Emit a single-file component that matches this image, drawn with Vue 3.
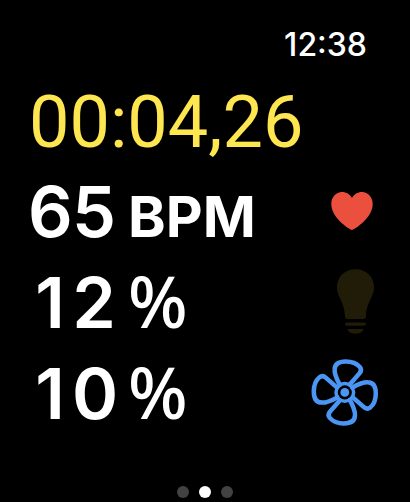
<script setup>
const metrics = [
  { id: 'heart', value: '65', unit: 'BPM' },
  { id: 'light', value: '12', unit: '%' },
  { id: 'fan', value: '10', unit: '%' },
]
const pages = [1, 2, 3]
const currentPage = 2
const blades = [0, 90, 180, 270]
</script>

<template>
  <main class="watch">
    <header class="status"><time>12:38</time></header>
    <div class="timer">00:04,26</div>
    <section v-for="m in metrics" :key="m.id" class="metric">
      <div class="reading">
        <span class="value"><span v-for="(digit, i) in m.value" :key="i" class="digit">{{ digit }}</span></span>
        <span class="unit" :class="{ percent: m.unit === '%' }">{{ m.unit }}</span>
      </div>
      <svg class="icon" :class="m.id" viewBox="0 0 72 91" aria-hidden="true">
        <path
          v-if="m.id === 'heart'"
          d="M44 62C42.500 62 23.300 50.500 23.300 36C23.300 29 28 24 34 24C38.500 24 42 26.300 44 30C46 26.300 49.500 24 54 24C60 24 64.700 29 64.700 36C64.700 50.500 45.500 62 44 62Z"
        />
        <template v-else-if="m.id === 'light'">
          <path d="M47.500 10.300C37 10.300 29 17.800 29 28C29 39 36.500 42 37 57.500Q37.200 60 39.500 60H55.500Q57.800 60 58 57.500C58.500 42 66 39 66 28C66 17.800 58 10.300 47.500 10.300Z" />
          <rect x="37" y="63.500" width="21" height="3.200" rx="1.600" />
          <path d="M39.500 70H55.500C55 73 52 74.500 47.500 74.500C43 74.500 40 73 39.500 70Z" />
        </template>
        <g v-else transform="translate(36.800 42.400)">
          <path
            v-for="angle in blades"
            :key="angle"
            class="blade"
            :transform="`rotate(${angle})`"
            d="M-5 -7.500C-8 -13 -10.500 -18 -10.200 -23C-10 -29 -6 -31 1 -31C7 -31 12 -29 15 -25.500C17 -23 16.500 -21 14.500 -18.800L5 -8"
          />
          <circle class="ring" r="8.800" />
          <circle r="4.400" />
        </g>
      </svg>
    </section>
    <nav class="pager" aria-label="Pages">
      <span v-for="p in pages" :key="p" class="dot" :class="{ current: p === currentPage }"></span>
    </nav>
  </main>
</template>

<style>
body {
  margin: 0;
  background: #000;
}
</style>

<style scoped>
.watch {
  display: flex;
  flex-direction: column;
  box-sizing: border-box;
  min-height: 100vh;
  padding-bottom: 4px;
  background: #000;
  color: #fff;
  font-family: Inter, sans-serif;
}
.status {
  padding: 25px 43px 12px;
  text-align: right;
  font-size: 32px;
  font-weight: 500;
  line-height: 40px;
}
.timer {
  padding-left: 29px;
  color: #fde650;
  font-family: Roboto, sans-serif;
  font-size: 72px;
  line-height: 91px;
  white-space: nowrap;
}
.metric {
  display: flex;
  justify-content: space-between;
  height: 91px;
  padding: 0 30px 0 28px;
}
.reading {
  display: flex;
  align-items: baseline;
  gap: 12px;
  font-size: 70px;
  line-height: 88px;
  font-weight: 600;
}
.digit {
  display: inline-block;
  width: 44px;
  text-align: center;
}
.unit {
  font-size: 57px;
  font-weight: 700;
  line-height: 1;
}
.unit.percent {
  font-family: "Noto Sans", sans-serif;
  font-size: 70px;
  font-weight: 500;
}
.icon {
  width: 72px;
  height: 91px;
}
.heart {
  fill: #eb4f3d;
}
.light {
  fill: #201c08;
}
.fan {
  fill: #4b96f4;
}
.blade,
.ring {
  fill: none;
  stroke: #4b96f4;
  stroke-width: 4.5;
  stroke-linecap: round;
  stroke-linejoin: round;
}
.ring {
  stroke-width: 3.5;
}
.pager {
  display: flex;
  justify-content: center;
  gap: 10px;
  margin-top: auto;
}
.dot {
  width: 12px;
  height: 12px;
  border-radius: 50%;
  background: #424242;
}
.dot.current {
  background: #fff;
}
</style>
